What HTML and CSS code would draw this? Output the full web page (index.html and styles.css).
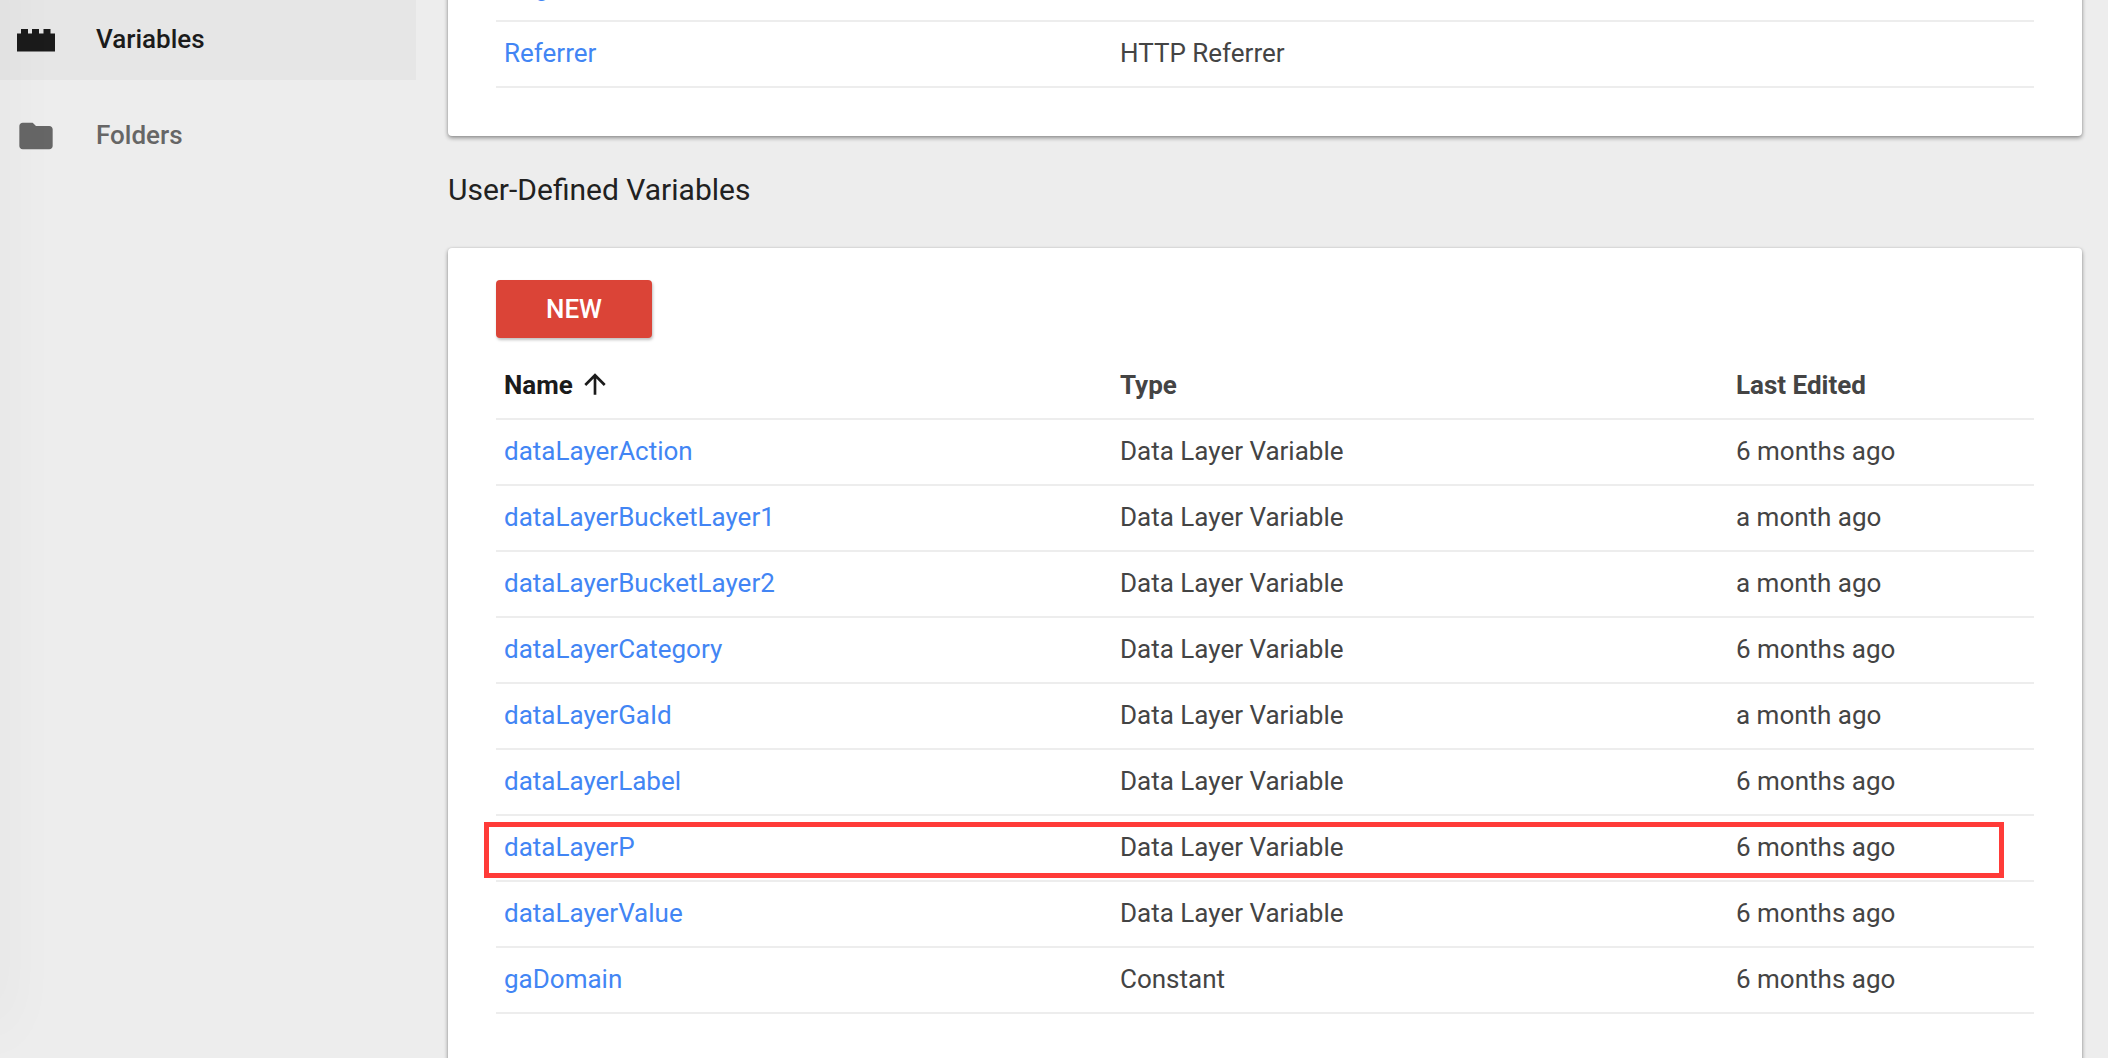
FILE: index.html
```html
<!DOCTYPE html>
<html lang="en">
<head>
<meta charset="utf-8">
<title>Variables</title>
<link rel="stylesheet" href="styles.css">
</head>
<body>
<div class="app">
  <nav class="sidebar">
    <a class="nav-item nav-item--active">
      <svg class="nav-icon" viewBox="0 0 40 40"><path d="M1 13.500h4V9h7v4.500h4V9h7v4.500h4.500V9h7v4.500H39v18H1z"/></svg>
      <span>Variables</span>
    </a>
    <a class="nav-item">
      <svg class="nav-icon" viewBox="0 0 24 24"><path d="M10 4H4c-1.100 0-1.990.9-1.990 2L2 18c0 1.100.9 2 2 2h16c1.100 0 2-.9 2-2V8c0-1.100-.9-2-2-2h-8l-2-2z"/></svg>
      <span>Folders</span>
    </a>
  </nav>
  <main class="content">
    <section class="card card--builtin">
      <div class="row"><a class="link">Page URL</a></div>
      <div class="row"><a class="link">Referrer</a><span>HTTP Referrer</span></div>
    </section>
    <h2 class="heading">User-Defined Variables</h2>
    <section class="card card--user">
      <button class="new-button">NEW</button>
      <div class="row row--head">
        <span class="sorted">Name<svg class="sort-icon" viewBox="0 0 24 24"><path d="M4 12l1.410 1.410L11 7.830V20h2V7.830l5.580 5.590L20 12l-8-8-8 8z"/></svg></span>
        <span>Type</span><span>Last Edited</span>
      </div>
      <div class="row"><a class="link">dataLayerAction</a><span>Data Layer Variable</span><span>6 months ago</span></div>
      <div class="row"><a class="link">dataLayerBucketLayer1</a><span>Data Layer Variable</span><span>a month ago</span></div>
      <div class="row"><a class="link">dataLayerBucketLayer2</a><span>Data Layer Variable</span><span>a month ago</span></div>
      <div class="row"><a class="link">dataLayerCategory</a><span>Data Layer Variable</span><span>6 months ago</span></div>
      <div class="row"><a class="link">dataLayerGaId</a><span>Data Layer Variable</span><span>a month ago</span></div>
      <div class="row"><a class="link">dataLayerLabel</a><span>Data Layer Variable</span><span>6 months ago</span></div>
      <div class="row row--marked"><a class="link">dataLayerP</a><span>Data Layer Variable</span><span>6 months ago</span></div>
      <div class="row"><a class="link">dataLayerValue</a><span>Data Layer Variable</span><span>6 months ago</span></div>
      <div class="row"><a class="link">gaDomain</a><span>Constant</span><span>6 months ago</span></div>
    </section>
  </main>
</div>
</body>
</html>
```
FILE: styles.css
```css
*,
*::before,
*::after {
  box-sizing: border-box;
}

body {
  margin: 0;
  background: #ededed;
  color: #444;
  font-family: Roboto, "Liberation Sans", sans-serif;
  font-size: 26px;
}

.app {
  position: relative;
  display: flex;
  height: 1058px;
  overflow: hidden;
}

/* soft shade cast along the left window edge */
.app::before {
  content: "";
  position: absolute;
  left: -20px;
  top: -60px;
  width: 20px;
  height: 1090px;
  box-shadow: 0 0 60px rgba(0, 0, 0, 0.07);
}

.sidebar {
  width: 416px;
  margin-top: -16px;
}

.nav-item {
  display: flex;
  align-items: center;
  gap: 40px;
  height: 96px;
  padding: 16px 0 0 16px;
  color: #666;
  fill: #666;
  font-weight: 500;
}

.nav-item span {
  line-height: 30px;
  margin-top: -2px;
}

.nav-item--active {
  background: #e6e6e6;
  color: #1b1b1b;
  fill: #1b1b1b;
}

.nav-icon {
  width: 40px;
  height: 40px;
}

.content {
  display: flex;
  flex-direction: column;
  width: 1634px;
  margin-left: 32px;
}

.card {
  flex: none;
  padding: 0 48px;
  background: #fff;
  border-radius: 4px;
  box-shadow: 0 2px 4px rgba(0, 0, 0, 0.4), 0 0 2px rgba(0, 0, 0, 0.12);
}

.card--builtin {
  margin-top: -44px;
  height: 180px;
}

.heading {
  flex: none;
  height: 112px;
  margin: 0;
  color: #212121;
  font-size: 30px;
  font-weight: 400;
  line-height: 107px;
}

.card--user {
  height: 850px;
  padding-top: 32px;
}

.new-button {
  display: block;
  width: 156px;
  height: 58px;
  margin: 0 0 16px;
  padding: 0;
  border: 0;
  border-radius: 4px;
  background: #db4437;
  box-shadow: 1px 2px 3px rgba(0, 0, 0, 0.25);
  color: #fff;
  font: 500 26px/58px Roboto, "Liberation Sans", sans-serif;
}

.row {
  display: grid;
  grid-template-columns: 616px 616px 1fr;
  height: 66px;
  padding-left: 8px;
  border-bottom: 2px solid #ededed;
  line-height: 62px;
}

.row--head {
  font-weight: 700;
}

.link {
  color: #4285f4;
}

.sorted {
  display: flex;
  align-items: center;
  height: 62px;
  color: #1b1b1b;
}

.sort-icon {
  width: 32px;
  height: 32px;
  margin: -2px 0 0 6px;
  fill: #1b1b1b;
}

.row--marked {
  position: relative;
}

.row--marked::after {
  content: "";
  position: absolute;
  left: -12px;
  top: 6px;
  width: 1520px;
  height: 56px;
  border: 5px solid #ff3b38;
}
```
